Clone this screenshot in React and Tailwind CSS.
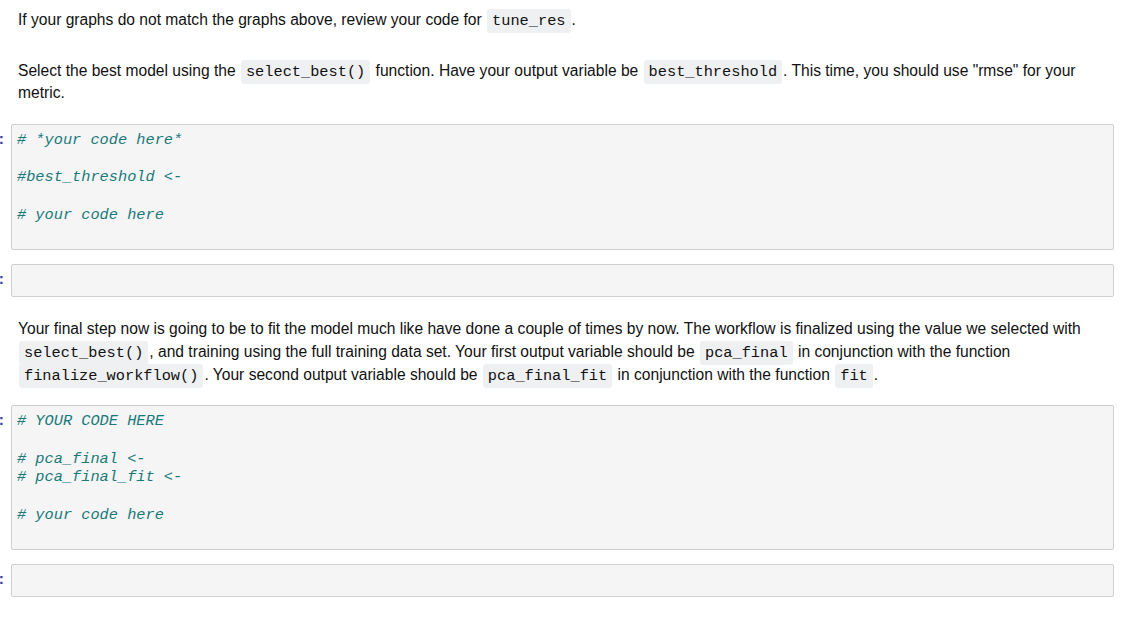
import React from 'react';

const C = ({ children }) => (
    <code className="font-['Liberation_Mono',monospace] text-[15.3px] leading-none bg-[#eff0f1] rounded-[3px] px-[5px] py-[3px] mx-[1px]">
        {children}
    </code>
);

const Cell = ({ lines }) => (
    <div className="flex">
        <div className="w-[11px] overflow-hidden flex justify-end pr-[5px] pt-[7px] font-['Liberation_Mono',monospace] text-[15.3px] leading-[18.7px] text-[#303f9f] font-bold">
            :
        </div>
        <div className="flex-1 min-w-0 min-h-[33px] border border-[#cfcfcf] bg-[#f5f5f5] rounded-[2px] px-[5px] py-[6px]">
            <pre className="font-['Liberation_Mono',monospace] text-[15.3px] leading-[18.7px] italic text-[#1a7a7a] m-0">
                {lines.length ? lines.join('\n') + '\n ' : ' '}
            </pre>
        </div>
    </div>
);

export default function App() {
    return (
        <div className="w-[1135px] h-[617px] overflow-hidden bg-white font-['Liberation_Sans',Arial,sans-serif] text-[15.6px] text-[#111]">
            <div className="pr-[21px] pt-[9px]">
                <p className="pl-[18px] leading-[22px]">
                    If your graphs do not match the graphs above, review your code for <C>tune_res</C>.
                </p>

                <p className="pl-[18px] leading-[22px] mt-[29px]">
                    Select the best model using the <C>select_best()</C> function. Have your output variable be <C>best_threshold</C>. This time, you should use "rmse" for your
                    <br />
                    metric.
                </p>

                <div className="mt-[20px]">
                    <Cell lines={['# *your code here*', '', '#best_threshold <-', '', '# your code here']} />
                </div>
                <div className="mt-[14px]">
                    <Cell lines={[]} />
                </div>

                <p className="pl-[18px] leading-[23px] mt-[20px]">
                    Your final step now is going to be to fit the model much like have done a couple of times by now. The workflow is finalized using the value we selected with
                    <br />
                    <C>select_best()</C>, and training using the full training data set. Your first output variable should be <C>pca_final</C> in conjunction with the function
                    <br />
                    <C>finalize_workflow()</C>. Your second output variable should be <C>pca_final_fit</C> in conjunction with the function <C>fit</C>.
                </p>

                <div className="mt-[19px]">
                    <Cell lines={['# YOUR CODE HERE', '', '# pca_final <-', '# pca_final_fit <-', '', '# your code here']} />
                </div>
                <div className="mt-[14px]">
                    <Cell lines={[]} />
                </div>
            </div>
        </div>
    );
}
